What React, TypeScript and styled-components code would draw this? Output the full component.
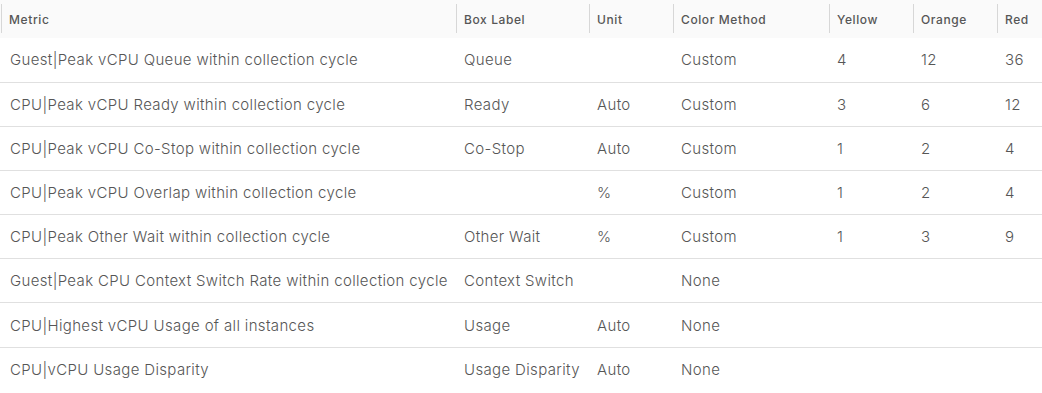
import React from "react";
import styled, { createGlobalStyle } from "styled-components";

const GlobalStyle = createGlobalStyle`
  html, body { margin: 0; padding: 0; background: #ffffff; }
  body { font-family: "Inter", "Noto Sans", sans-serif; }
`;

const Grid = styled.table`
  width: 1042px;
  border-collapse: collapse;
  table-layout: fixed;
  color: #565656;
`;

const HeadRow = styled.tr`
  background: #fafafa;
  height: 38px;
`;

const HeadCell = styled.th<{ $first?: boolean }>`
  position: relative;
  text-align: left;
  font-weight: 500;
  font-size: 12px;
  letter-spacing: 0.6px;
  color: #565656;
  padding: 0 0 0 ${(p) => (p.$first ? "9px" : "8px")};
  &::before {
    content: "";
    position: absolute;
    left: ${(p) => (p.$first ? "1px" : "0")};
    top: 4px;
    bottom: 5px;
    width: 1px;
    background: #d7d7d7;
  }
`;

const BodyRow = styled.tr<{ $last?: boolean }>`
  height: 44.17px;
  border-bottom: ${(p) => (p.$last ? "none" : "1px solid #e0e0e0")};
`;

const Cell = styled.td<{ $first?: boolean }>`
  font-size: 15px;
  font-weight: 300;
  letter-spacing: 0.35px;
  color: #565656;
  padding: 0 0 0 ${(p) => (p.$first ? "10px" : "8px")};
  white-space: nowrap;
  overflow: hidden;
`;

const cols = [456, 133, 84, 156, 84, 84, 45];
const headers = ["Metric", "Box Label", "Unit", "Color Method", "Yellow", "Orange", "Red"];
const rows: string[][] = [
  ["Guest|Peak vCPU Queue within collection cycle", "Queue", "", "Custom", "4", "12", "36"],
  ["CPU|Peak vCPU Ready within collection cycle", "Ready", "Auto", "Custom", "3", "6", "12"],
  ["CPU|Peak vCPU Co-Stop within collection cycle", "Co-Stop", "Auto", "Custom", "1", "2", "4"],
  ["CPU|Peak vCPU Overlap within collection cycle", "", "%", "Custom", "1", "2", "4"],
  ["CPU|Peak Other Wait within collection cycle", "Other Wait", "%", "Custom", "1", "3", "9"],
  ["Guest|Peak CPU Context Switch Rate within collection cycle", "Context Switch", "", "None", "", "", ""],
  ["CPU|Highest vCPU Usage of all instances", "Usage", "Auto", "None", "", "", ""],
  ["CPU|vCPU Usage Disparity", "Usage Disparity", "Auto", "None", "", "", ""],
];

export default function App() {
  return (
    <>
      <GlobalStyle />
      <Grid>
        <colgroup>
          {cols.map((w, i) => (
            <col key={i} style={{ width: w }} />
          ))}
        </colgroup>
        <thead>
          <HeadRow>
            {headers.map((h, i) => (
              <HeadCell key={h} $first={i === 0}>
                {h}
              </HeadCell>
            ))}
          </HeadRow>
        </thead>
        <tbody>
          {rows.map((r, ri) => (
            <BodyRow key={ri} $last={ri === rows.length - 1}>
              {r.map((c, ci) => (
                <Cell key={ci} $first={ci === 0}>
                  {c}
                </Cell>
              ))}
            </BodyRow>
          ))}
        </tbody>
      </Grid>
    </>
  );
}
